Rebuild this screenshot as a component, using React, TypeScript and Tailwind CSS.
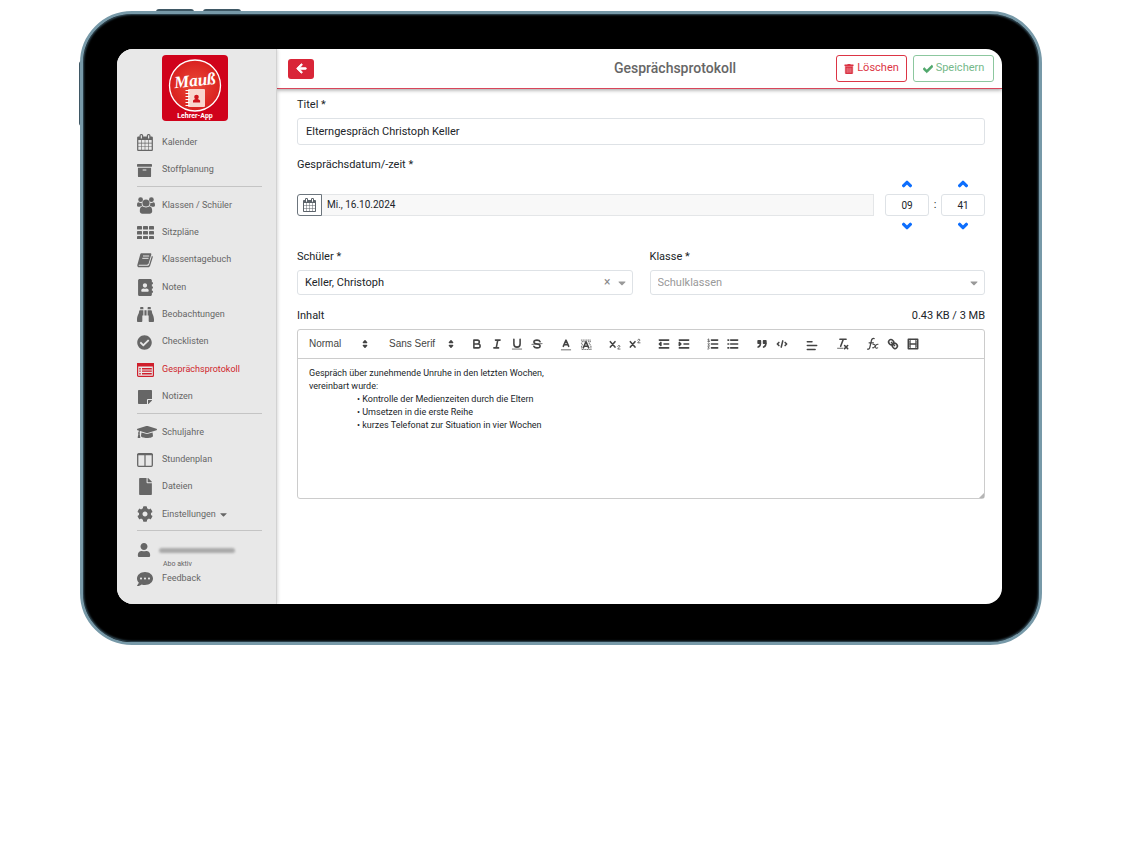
import { Fragment, useState } from "react";
import type { ReactNode } from "react";
import {
  FaAddressBook,
  FaArchive,
  FaArrowLeft,
  FaBinoculars,
  FaCaretDown,
  FaCheck,
  FaCheckCircle,
  FaChevronDown,
  FaChevronUp,
  FaCog,
  FaCommentDots,
  FaFile,
  FaGraduationCap,
  FaStickyNote,
  FaTrashAlt,
  FaUser,
} from "react-icons/fa";

const CalendarIcon = ({ className }: { className: string }) => (
  <svg viewBox="64 0 1664 1792" fill="currentColor" className={className} aria-hidden="true">
    <path d="M192 1664h288v-288h-288v288zm352 0h320v-288h-320v288zm-352-352h288v-320h-288v320zm352 0h320v-320h-320v320zm-352-384h288v-288h-288v288zm736 736h320v-288h-320v288zm-384-736h320v-288h-320v288zm768 736h288v-288h-288v288zm-384-352h320v-320h-320v320zm-352-864v-288q0-13-9.5-22.5t-22.5-9.5h-64q-13 0-22.5 9.5t-9.5 22.5v288q0 13 9.5 22.5t22.5 9.5h64q13 0 22.5-9.5t9.5-22.5zm736 864h288v-320h-288v320zm-384-384h320v-288h-320v288zm384 0h288v-288h-288v288zm32-480v-288q0-13-9.5-22.5t-22.5-9.5h-64q-13 0-22.5 9.5t-9.5 22.5v288q0 13 9.5 22.5t22.5 9.5h64q13 0 22.5-9.5t9.5-22.5zm384-64v1280q0 52-38 90t-90 38h-1408q-52 0-90-38t-38-90v-1280q0-52 38-90t90-38h128v-96q0-66 47-113t113-47h64q66 0 113 47t47 113v96h384v-96q0-66 47-113t113-47h64q66 0 113 47t47 113v96h128q52 0 90 38t38 90z" />
  </svg>
);

const UsersIcon = () => (
  <svg viewBox="0 0 18 17" fill="currentColor" className="h-[17px] w-[18px]" aria-hidden="true">
    <circle cx="3.600" cy="2.700" r="2.400" />
    <circle cx="14.400" cy="2.700" r="2.400" />
    <path d="M0 8.200c0-1.800.4-3 1.500-3 .8.7 2.500.9 3.300.5-.3 1.300 0 2.300.6 3.100-.9 0-1.800.3-2.400 1H1.800C.7 9.800 0 9.200 0 8.200zM18 8.200c0-1.800-.4-3-1.500-3-.8.7-2.500.9-3.300.5.3 1.300 0 2.300-.6 3.100.9 0 1.800.3 2.400 1h1.200c1.100 0 1.800-.6 1.800-1.600z" />
    <circle cx="9" cy="6" r="3.600" />
    <path d="M2.800 14.200c0-2.500.7-4.900 2.700-4.900 1 .5 2 1.100 3.500 1.100s2.500-.6 3.500-1.100c2 0 2.700 2.400 2.700 4.900 0 1.600-1.100 2.500-2.500 2.500H5.300c-1.400 0-2.500-.9-2.500-2.500z" />
  </svg>
);

const GridIcon = () => (
  <svg viewBox="0 0 17 13" fill="currentColor" className="h-[13px] w-[17px]" aria-hidden="true">
    {[0, 5, 10].map((y) =>
      [0, 6, 12].map((x) => <rect key={`${x}-${y}`} x={x} y={y} width="5" height="3.600" rx=".7" />),
    )}
  </svg>
);

const BookIcon = () => (
  <svg viewBox="0 0 16 16" className="size-4" aria-hidden="true">
    <path d="M4.6 1.2h8.7c.8 0 1.2.6 1 1.3l-2.7 9c-.2.7-.8 1.2-1.6 1.2H2.1c-.6 0-.8.9 0 1h8.6c.7 0 1.2-.4 1.4-1l2.8-8.9c.8.3 1 .9.8 1.6l-2.6 8.3c-.3.9-1 1.5-2 1.5H2C.8 15.200 0 14 .4 12.700L3.200 2.400c.2-.7.700-1.200 1.400-1.200z" fill="currentColor" />
    <path d="M6 4h6.200M5.300 6.300h6.200" stroke="#e8e8e8" strokeWidth="1" />
  </svg>
);

const ProtocolIcon = () => (
  <svg viewBox="0 0 17 14" className="h-[14px] w-[17px]" aria-hidden="true">
    <rect x=".6" y=".6" width="15.800" height="12.800" rx="1" fill="none" stroke="currentColor" strokeWidth="1.200" />
    <path d="M0 0h17v3.500H0zM2.300 5h1.400v1.400H2.300zM2.300 7.500h1.400v1.300H2.300zM2.300 10h1.400v1.400H2.300zM5 5h9.800v1.400H5zM5 7.500h9.800v1.300H5zM5 10h9.800v1.400H5z" fill="currentColor" />
  </svg>
);

const ColumnsIcon = () => (
  <svg viewBox="0 0 16 14" className="h-[14px] w-4" aria-hidden="true">
    <rect x=".7" y=".7" width="14.600" height="12.600" rx="1" fill="none" stroke="currentColor" strokeWidth="1.300" />
    <path d="M0 1h16v1.300H0zM7.400 1h1.200v12H7.400z" fill="currentColor" />
  </svg>
);

interface NavItem {
  label: string;
  icon: ReactNode;
  active?: boolean;
  caret?: boolean;
}

const NAV_GROUPS: { grow: string; items: NavItem[] }[] = [
  {
    grow: "grow-2",
    items: [
      { label: "Kalender", icon: <CalendarIcon className="h-[17px] w-4" /> },
      { label: "Stoffplanung", icon: <FaArchive size={15} /> },
    ],
  },
  {
    grow: "grow-8",
    items: [
      { label: "Klassen / Schüler", icon: <UsersIcon /> },
      { label: "Sitzpläne", icon: <GridIcon /> },
      { label: "Klassentagebuch", icon: <BookIcon /> },
      { label: "Noten", icon: <FaAddressBook size={17} /> },
      { label: "Beobachtungen", icon: <FaBinoculars size={17} /> },
      { label: "Checklisten", icon: <FaCheckCircle size={15} /> },
      { label: "Gesprächsprotokoll", icon: <ProtocolIcon />, active: true },
      { label: "Notizen", icon: <FaStickyNote size={16} /> },
    ],
  },
  {
    grow: "grow-4",
    items: [
      { label: "Schuljahre", icon: <FaGraduationCap size={20} /> },
      { label: "Stundenplan", icon: <ColumnsIcon /> },
      { label: "Dateien", icon: <FaFile size={17} /> },
      { label: "Einstellungen", icon: <FaCog size={16} />, caret: true },
    ],
  },
];

const Logo = () => (
  <svg viewBox="0 0 66 66" className="mx-auto block size-[66px]" role="img" aria-label="Lehrer-App">
    <defs>
      <radialGradient id="logo-red">
        <stop offset="0" stopColor="#ea4a38" />
        <stop offset="1" stopColor="#d9201f" />
      </radialGradient>
    </defs>
    <rect width="66" height="66" rx="4" fill="#d0021b" />
    <circle cx="33" cy="30.500" r="25.500" fill="url(#logo-red)" stroke="#fff" strokeWidth="1.300" />
    <rect x="26" y="34" width="17" height="18" rx="1" fill="#f9d5cd" />
    <path d="M23.500 35.500h4M23.500 38.500h4M23.500 41.500h4M23.500 44.500h4M23.500 47.500h4M23.500 50.500h4" stroke="#fff" strokeWidth="1" />
    <circle cx="34.500" cy="42" r="2.300" fill="#d0121b" />
    <path d="M31 47.500v-1.700c0-1 1.500-1.700 2.700-1.900h1.700c1.200.2 2.700.9 2.700 1.900v1.700z" fill="#d0121b" />
    <text x="33" y="31" textAnchor="middle" transform="rotate(-6 33 27)" fill="#fff" fontFamily="Liberation Serif, serif" fontStyle="italic" fontWeight="700" fontSize="17">
      Mauß
    </text>
    <text x="33" y="63" textAnchor="middle" fill="#fff" fontFamily="Roboto, sans-serif" fontWeight="700" fontSize="7">
      Lehrer-App
    </text>
  </svg>
);

const Sidebar = () => (
  <aside className="z-10 flex w-40 shrink-0 flex-col border-r border-[#d2d2d2] bg-[#e8e8e8] pt-[6px] pb-[14px] text-[9px] text-[#666] shadow-[1px_0_3px_rgba(0,0,0,0.15)]">
    <div className="pr-1">
      <Logo />
    </div>
    <nav className="mt-2 flex flex-1 flex-col">
      {NAV_GROUPS.map(({ grow, items }) => (
        <Fragment key={items[0].label}>
          <ul className={`flex basis-0 flex-col ${grow}`}>
            {items.map(({ label, icon, active, caret }) => (
              <li key={label} className="flex flex-1">
                <a href="#" className={`flex flex-1 items-center pl-5 ${active ? "text-[#cf1f2c]" : ""}`}>
                  <span className="flex w-[25px] shrink-0">{icon}</span>
                  {label}
                  {caret && <FaCaretDown size={11} className="ml-[2px]" />}
                </a>
              </li>
            ))}
          </ul>
          <hr className="mt-[2px] mr-[14px] mb-[5px] ml-5 border-[#c4c4c4]" />
        </Fragment>
      ))}
    </nav>
    <div className="flex h-6 items-center pt-1 pl-5">
      <FaUser size={14} />
      <span className="ml-2 h-[5px] w-[76px] rounded-full bg-[#aaa] blur-[1px]" />
    </div>
    <p className="pl-[46px] text-[7px] leading-2">Abo aktiv</p>
    <a href="#" className="flex h-[22px] items-center pl-5">
      <span className="flex w-[25px]">
        <FaCommentDots size={16} />
      </span>
      Feedback
    </a>
  </aside>
);

const TOOL_GROUPS: { label: string; icon: ReactNode }[][] = [
  [
    {
      label: "Fett",
      icon: <path d="M5 4h4.500a2.500 2.500 0 0 1 0 5H5zM5 9h5.500a2.500 2.500 0 0 1 0 5H5z" />,
    },
    { label: "Kursiv", icon: <path d="M7 4h6M5 14h6M8 14l2-10" /> },
    {
      label: "Unterstrichen",
      icon: (
        <>
          <path d="M5 3v6a4 4 0 0 0 8 0V3" />
          <path d="M3 15.500h12" strokeWidth="1" />
        </>
      ),
    },
    {
      label: "Durchgestrichen",
      icon: (
        <>
          <path d="M13 6C12.500 4.700 11 4 9 4 6.800 4 5 5 5 6.500S6.500 8.800 9 9s4 .9 4 2.500S11.200 14 9 14c-2 0-3.500-.8-4-2" />
          <path d="M15.500 8.500l-13 1" strokeWidth="1" />
        </>
      ),
    },
  ],
  [
    {
      label: "Textfarbe",
      icon: (
        <>
          <path d="M5.500 12L9 4l3.500 8M11.600 10H6.400" />
          <path d="M3 16.500h12" strokeWidth="1" />
        </>
      ),
    },
    {
      label: "Hintergrundfarbe",
      icon: (
        <>
          <path
            d="M3 4h12M4 6h3M12 6h4M3 8h2M13 8h2M4 10h1M14 10h2M3 12h1M15 12h1M3 14h1M15 14h1M4 16h12"
            strokeWidth="1"
            strokeDasharray=".6 1.600"
          />
          <path d="M5.500 14L9 6l3.500 8M11.600 12H6.400" />
        </>
      ),
    },
  ],
  [
    {
      label: "Tiefgestellt",
      icon: (
        <>
          <path d="M3 6l6 7M9 6l-6 7" />
          <path d="M12.500 12c.2-1.600 2.800-1.500 2.800 0 0 1.400-2.800 2-2.800 3.500h3" strokeWidth="1" />
        </>
      ),
    },
    {
      label: "Hochgestellt",
      icon: (
        <>
          <path d="M3 6l6 7M9 6l-6 7" />
          <path d="M12.500 4c.2-1.600 2.800-1.500 2.800 0 0 1.400-2.800 2-2.800 3.500h3" strokeWidth="1" />
        </>
      ),
    },
  ],
  [
    {
      label: "Einzug verkleinern",
      icon: (
        <>
          <path d="M3 14h12M3 4h12M9 9h6" />
          <path d="M5 7v4L3 9z" fill="currentColor" />
        </>
      ),
    },
    {
      label: "Einzug vergrößern",
      icon: (
        <>
          <path d="M3 14h12M3 4h12M9 9h6" />
          <path d="M3 7v4l2-2z" fill="currentColor" />
        </>
      ),
    },
  ],
  [
    {
      label: "Nummerierte Liste",
      icon: (
        <>
          <path d="M7 4h8M7 9h8M7 14h8" />
          <path d="M2.500 3l1-.5v3M2.300 5.500h2.400M2.500 8c.6-.8 1.800-.4 1.700.4-.1.800-1.700 1.400-1.700 2.100h2M2.500 12.500h1.700l-1 1.200c1.600.2 1.300 1.900-.9 1.800" strokeWidth="1" />
        </>
      ),
    },
    { label: "Aufzählung", icon: <path d="M6 4h9M6 9h9M6 14h9M2.500 4h1M2.500 9h1M2.500 14h1" /> },
  ],
  [
    {
      label: "Zitat",
      icon: (
        <>
          <path d="M4 5h3v3H4zM11 5h3v3h-3z" fill="currentColor" />
          <path d="M7 8c0 4-3 5-3 5M14 8c0 4-3 5-3 5" />
        </>
      ),
    },
    { label: "Code", icon: <path d="M5 7L3 9l2 2M13 7l2 2-2 2M10 5L8 13" /> },
  ],
  [{ label: "Ausrichtung", icon: <path d="M3 11h12M3 16h10M3 6h6" /> }],
  [
    {
      label: "Formatierung entfernen",
      icon: (
        <>
          <path d="M5 3h8M6 12l3.400-9M11 11l4 4M15 11l-4 4" />
          <path d="M2 14.500h7" strokeWidth="1" />
        </>
      ),
    },
  ],
  [
    {
      label: "Formel",
      icon: (
        <>
          <path d="M2 15.500c1.700.5 2.500-.5 3-2.500l2-8.500C7.500 2.500 8.500 1.500 10.500 2M4 7.500h5.500" strokeWidth="1.600" />
          <path d="M9 9.500c2-.8 2.400.3 3 2.700s1.200 2.800 3 1.800M15.500 9.300c-2-.5-3 1.200-4 2.700s-1.500 2.400-3 1.800" strokeWidth="1.400" />
        </>
      ),
    },
    {
      label: "Link",
      icon: (
        <path d="M7 7l4 4M8.900 4.577a3.476 3.476 0 0 1 .36 4.679A3.476 3.476 0 0 1 4.577 8.900C3.185 7.500 2.035 6.400 4.217 4.217S7.500 3.185 8.900 4.577zM13.423 9.100a3.476 3.476 0 0 0-4.679-.36 3.476 3.476 0 0 0 .36 4.679c1.392 1.392 2.500 2.542 4.679.36S14.815 10.500 13.423 9.100z" />
      ),
    },
    {
      label: "Video",
      icon: (
        <>
          <path d="M3 3h12v12H3z" />
          <path d="M5.500 3v12M12.500 3v12M3 5.500h2M3 7.500h2M3 10.500h2M3 12.500h2M13 5.500h2M13 7.500h2M13 10.500h2M13 12.500h2" strokeWidth="1" />
          <path d="M5 9h8" />
        </>
      ),
    },
  ],
];

const ToolSelect = ({ label, value, width }: { label: string; value: string; width: string }) => (
  <div className={`relative flex shrink-0 items-center ${width}`}>
    <select
      aria-label={label}
      defaultValue={value}
      className="w-full appearance-none bg-transparent font-['Liberation_Sans',sans-serif] text-[10px] leading-4 font-medium text-[#444] focus:outline-none"
    >
      <option>{value}</option>
    </select>
    <svg viewBox="0 0 18 18" className="pointer-events-none absolute right-0 size-[14px] fill-[#444] stroke-[#444] stroke-2" strokeLinejoin="round" aria-hidden="true">
      <path d="M7 11l2 2 2-2zM7 7l2-2 2 2z" />
    </svg>
  </div>
);

const Editor = () => (
  <div className="relative rounded-[3px] border border-[#ccc]">
    <div className="flex h-[29px] items-center gap-[9px] border-b border-[#ccc] pl-[11px]">
      <ToolSelect label="Absatzformat" value="Normal" width="w-[63px]" />
      <div className="ml-2">
        <ToolSelect label="Schriftart" value="Sans Serif" width="w-[69px]" />
      </div>
      {TOOL_GROUPS.map((group) => (
        <div key={group[0].label} className="flex min-w-[22px] justify-center">
          {group.map(({ label, icon }) => (
            <button key={label} type="button" aria-label={label} className="flex h-5 w-5 items-center justify-center text-[#444]">
              <svg viewBox="0 0 18 18" className="size-[14px] fill-none stroke-current" strokeWidth="2" strokeLinecap="round" strokeLinejoin="round" aria-hidden="true">
                {icon}
              </svg>
            </button>
          ))}
        </div>
      ))}
    </div>
    <textarea
      id="inhalt"
      defaultValue={[
        "Gespräch über zunehmende Unruhe in den letzten Wochen,",
        "vereinbart wurde:",
        "\t• Kontrolle der Medienzeiten durch die Eltern",
        "\t• Umsetzen in die erste Reihe",
        "\t• kurzes Telefonat zur Situation in vier Wochen",
      ].join("\n")}
      className="block h-[139px] w-full resize-none px-[11px] py-2 text-[9px] leading-[13px] text-[#212529] [tab-size:48px] focus:outline-none"
    />
    <svg viewBox="0 0 5 5" className="pointer-events-none absolute right-0 bottom-0 size-[5px]" aria-hidden="true">
      <path d="M5 0v5H0z" fill="#b5b5b5" />
    </svg>
  </div>
);

const TimeField = ({ label, initial, max }: { label: string; initial: number; max: number }) => {
  const [value, setValue] = useState(initial);
  const step = (delta: number) => setValue((value + delta + max) % max);

  return (
    <div className="flex w-11 flex-col items-center text-[#0d6efd]">
      <button type="button" aria-label={`${label} erhöhen`} onClick={() => step(1)} className="flex h-5 items-center">
        <FaChevronUp size={10} strokeWidth={80} />
      </button>
      <input
        aria-label={label}
        value={String(value).padStart(2, "0")}
        onChange={(event) => setValue(Number(event.target.value) % max || 0)}
        className="h-[22px] w-full rounded-[3px] border border-[#dee2e6] text-center text-[10px] text-[#212529]"
      />
      <button type="button" aria-label={`${label} verringern`} onClick={() => step(-1)} className="flex h-5 items-center">
        <FaChevronDown size={10} strokeWidth={80} />
      </button>
    </div>
  );
};

const ProtocolForm = () => {
  const [student, setStudent] = useState("Keller, Christoph");

  return (
    <form className="pr-[17px] pl-5 text-[11px] leading-4 text-[#212529]">
      <label htmlFor="titel" className="mt-2 block">
        Titel *
      </label>
      <input
        id="titel"
        defaultValue="Elterngespräch Christoph Keller"
        className="mt-[5px] block h-[27px] w-full rounded-[3px] border border-[#dee2e6] px-2"
      />

      <label htmlFor="datum" className="mt-3 block">
        Gesprächsdatum/-zeit *
      </label>
      <div className="mt-px flex items-center">
        <div className="flex h-[22px] flex-1">
          <button type="button" aria-label="Datum wählen" className="flex w-[25px] items-center justify-center rounded-l-[3px] border border-[#6c757d] text-[#5c636a]">
            <CalendarIcon className="h-[14px] w-[13px]" />
          </button>
          <input
            id="datum"
            readOnly
            defaultValue="Mi., 16.10.2024"
            className="min-w-0 flex-1 border border-l-0 border-[#e4e6e8] bg-[#f8f8f8] px-[5px] text-[10px]"
          />
        </div>
        <div className="ml-[11px] flex items-center">
          <TimeField label="Stunde" initial={9} max={24} />
          <span className="w-3 text-center">:</span>
          <TimeField label="Minute" initial={41} max={60} />
        </div>
      </div>

      <div className="mt-[13px] grid grid-cols-2 gap-[17px]">
        <div>
          <label htmlFor="schueler" className="block">
            Schüler *
          </label>
          <div className="relative mt-[5px]">
            <select
              id="schueler"
              value={student}
              onChange={(event) => setStudent(event.target.value)}
              className="block h-[25px] w-full appearance-none rounded-[3px] border border-[#dee2e6] px-[7px]"
            >
              <option value="" />
              <option>Keller, Christoph</option>
            </select>
            <button type="button" aria-label="Auswahl löschen" onClick={() => setStudent("")} className="absolute top-1 right-[22px] text-[12px] text-[#888]">
              ×
            </button>
            <FaCaretDown size={12} className="pointer-events-none absolute top-[7px] right-[5px] text-[#999]" />
          </div>
        </div>
        <div>
          <label htmlFor="klasse" className="block">
            Klasse *
          </label>
          <div className="relative mt-[5px]">
            <select id="klasse" className="block h-[25px] w-full appearance-none rounded-[3px] border border-[#dee2e6] px-[7px] text-[#999]">
              <option>Schulklassen</option>
            </select>
            <FaCaretDown size={12} className="pointer-events-none absolute top-[7px] right-[5px] text-[#999]" />
          </div>
        </div>
      </div>

      <div className="mt-[13px] mb-[5px] flex justify-between">
        <label htmlFor="inhalt">Inhalt</label>
        <span>0.43 KB / 3 MB</span>
      </div>
      <Editor />
    </form>
  );
};

const App = () => (
  <div className="relative mt-[11px] mr-[82px] ml-20">
    <div className="absolute -top-[2px] left-[76px] h-[3px] w-[38px] rounded-t-sm bg-[#3f5865]" />
    <div className="absolute -top-[2px] left-[123px] h-[3px] w-[38px] rounded-t-sm bg-[#3f5865]" />
    <div className="absolute top-[50px] -left-px h-[65px] w-[3px] rounded-l-sm bg-[#3f5865]" />
    <div className="relative rounded-[52px] border-3 border-[#7799a8] bg-black pt-[35px] pr-[37px] pb-[38px] pl-[34px] shadow-[inset_0_0_2px_1px_#35505e]">
      <div className="flex min-h-[555px] overflow-hidden rounded-2xl bg-white font-[Roboto,sans-serif]">
        <Sidebar />
        <main className="min-w-0 flex-1">
          <header className="flex h-10 items-center border-b border-[#d9455a] pr-2 pl-[11px] text-[11px] shadow-[0_1px_4px_rgba(0,0,0,0.4)]">
            <div className="w-[150px]">
              <button type="button" aria-label="Zurück" className="flex h-5 w-[26px] items-center justify-center rounded-[3px] bg-[#d92638] text-white">
                <FaArrowLeft size={11} strokeWidth={40} />
              </button>
            </div>
            <h1 className="flex-1 pl-[76px] text-center text-[14px] font-medium text-[#666]">Gesprächsprotokoll</h1>
            <div className="flex gap-[6px]">
              <button type="button" className="flex h-[27px] w-[71px] items-center justify-center gap-[3px] rounded-[3px] border border-[#dc3545] text-[#dc3545]">
                <FaTrashAlt size={10} strokeWidth={20} />
                Löschen
              </button>
              <button type="button" className="flex h-[27px] w-[81px] items-center justify-center gap-[3px] rounded-[3px] border border-[#8cc79f] text-[#75b98a]">
                <FaCheck size={10} strokeWidth={40} className="text-[#4fa76b]" />
                Speichern
              </button>
            </div>
          </header>
          <ProtocolForm />
        </main>
      </div>
    </div>
  </div>
);

export default App;
